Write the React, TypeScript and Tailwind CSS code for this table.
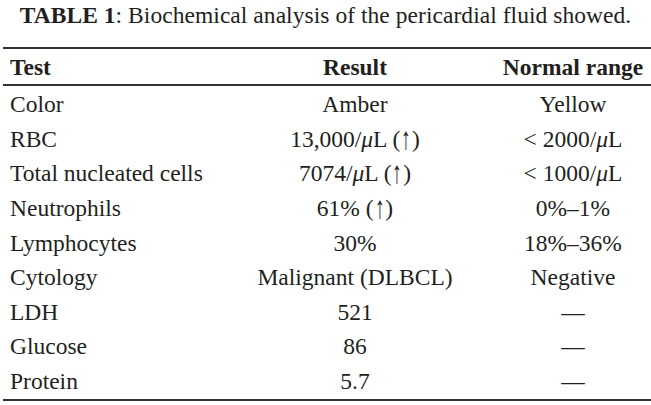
import React from "react";

const Up = () => <span className="inline-block scale-y-[1.35] scale-x-[0.85] translate-y-[-1px]">↑</span>;

const rows: [string, React.ReactNode, React.ReactNode][] = [
  ["Color", "Amber", "Yellow"],
  ["RBC", <>13,000/<i>μ</i>L (<Up />)</>, <>&lt; 2000/<i>μ</i>L</>],
  ["Total nucleated cells", <>7074/<i>μ</i>L (<Up />)</>, <>&lt; 1000/<i>μ</i>L</>],
  ["Neutrophils", <>61% (<Up />)</>, "0%–1%"],
  ["Lymphocytes", "30%", "18%–36%"],
  ["Cytology", "Malignant (DLBCL)", "Negative"],
  ["LDH", "521", "—"],
  ["Glucose", "86", "—"],
  ["Protein", "5.7", "—"],
];

export default function App() {
  return (
    <div
      className="w-[651px] h-[405px] bg-white text-[#231f20] overflow-hidden"
      style={{ fontFamily: '"Liberation Serif", "Times New Roman", serif' }}
    >
      <div className="h-[47px] pt-[2px] text-center text-[23.5px] leading-[26px] tracking-[0.05px]">
        <span className="font-bold">TABLE 1</span>: Biochemical analysis of the pericardial fluid showed.
      </div>
      <div className="ml-[3px] w-[648px]">
        <div className="border-t-2 border-b-2 border-[#333] grid grid-cols-[212px_280px_156px] h-[39px] items-center text-[23.5px] font-bold leading-[26px]">
          <div className="pl-[7px]">Test</div>
          <div className="text-center">Result</div>
          <div className="text-center">Normal range</div>
        </div>
        <div className="border-b-2 border-[#333] pt-[1px] pb-[1px]">
          {rows.map(([a, b, c], i) => (
            <div
              key={i}
              className="grid grid-cols-[212px_280px_156px] h-[34.6px] items-center text-[23.5px] leading-[26px]"
            >
              <div className="pl-[7px] whitespace-nowrap">{a}</div>
              <div className="text-center whitespace-nowrap">{b}</div>
              <div className="text-center whitespace-nowrap">{c}</div>
            </div>
          ))}
        </div>
      </div>
    </div>
  );
}
